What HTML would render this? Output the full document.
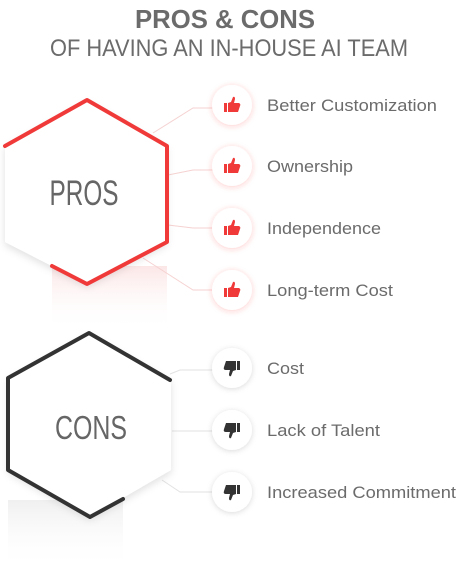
<!DOCTYPE html>
<html><head><style>html,body{margin:0;padding:0;background:#fff}svg{display:block}</style></head>
<body>
<svg width="460" height="580" viewBox="0 0 460 580" xmlns="http://www.w3.org/2000/svg">
<defs>
<linearGradient id="pg" x1="0" y1="0" x2="0" y2="1"><stop offset="0" stop-color="#f8c8c8" stop-opacity=".45"/><stop offset="1" stop-color="#fff" stop-opacity="0"/></linearGradient>
<linearGradient id="cg" x1="0" y1="0" x2="0" y2="1"><stop offset="0" stop-color="#ddd" stop-opacity=".45"/><stop offset="1" stop-color="#fff" stop-opacity="0"/></linearGradient>
<filter id="sh" x="-20%" y="-20%" width="140%" height="140%"><feDropShadow dx="0" dy="3" stdDeviation="4" flood-color="#000" flood-opacity=".12"/></filter>
<filter id="rs" x="-40%" y="-40%" width="180%" height="180%"><feDropShadow dx="0" dy="1" stdDeviation="3" flood-color="#f33" flood-opacity=".25"/></filter>
<filter id="gs" x="-40%" y="-40%" width="180%" height="180%"><feDropShadow dx="0" dy="1" stdDeviation="3" flood-color="#000" flood-opacity=".15"/></filter>
</defs>
<text x="225" y="28" text-anchor="middle" font-family="Liberation Sans, sans-serif" font-weight="bold" font-size="26" fill="#6b6b6b" textLength="180" lengthAdjust="spacingAndGlyphs">PROS &amp; CONS</text>
<text x="229" y="56" text-anchor="middle" font-family="Liberation Sans, sans-serif" font-size="24" fill="#6b6b6b" textLength="358" lengthAdjust="spacingAndGlyphs">OF HAVING AN IN-HOUSE AI TEAM</text>

<rect x="52" y="266" width="115" height="64" fill="url(#pg)"/>
<rect x="8" y="500" width="115" height="70" fill="url(#cg)"/>

<g fill="none" stroke="#f6d2d2" stroke-width="1">
<polyline points="153,133 193,108 214,108"/>
<polyline points="168,175 193,170 214,170"/>
<polyline points="168,225 193,228 214,228"/>
<polyline points="143,258 193,290 214,290"/>
</g>
<g fill="none" stroke="#e2e2e2" stroke-width="1">
<polyline points="170,374 180,370 214,370"/>
<polyline points="172,431 214,431"/>
<polyline points="162,480 180,492 214,492"/>
</g>

<polygon points="87,100 167,146 167,242 87,284 5,242 5,146" fill="#fff" filter="url(#sh)"/>
<polyline points="5,146 87,100 167,146 167,242 87,284 52,266" fill="none" stroke="#f03a3a" stroke-width="4" stroke-linecap="round" stroke-linejoin="round"/>
<text x="84" y="205" text-anchor="middle" font-family="Liberation Sans Narrow, sans-serif" font-size="35" fill="#666" textLength="69" lengthAdjust="spacingAndGlyphs">PROS</text>

<polygon points="89,333 171,380 171,470 90,517 8,470 8,378" fill="#fff" filter="url(#sh)"/>
<polyline points="170,380 89,333 8,378 8,470 90,517 123,499" fill="none" stroke="#333" stroke-width="4" stroke-linecap="round" stroke-linejoin="round"/>
<text x="91" y="439" text-anchor="middle" font-family="Liberation Sans Narrow, sans-serif" font-size="33" fill="#666" textLength="72" lengthAdjust="spacingAndGlyphs">CONS</text>

<g font-family="Liberation Sans, sans-serif" font-size="17" fill="#6b6b6b">
<g transform="translate(232,105)"><circle r="20" fill="#fff" filter="url(#rs)"/><g fill="#f03a3a"><rect x="-8" y="-2" width="3" height="9"/><path d="M-4,-2 L-1,-3 L1,-8 Q3,-9 3,-6 L2,-2 L7,-2 Q9,-1 8,1 L6,7 L-4,7 Z"/></g></g>
<text x="267" y="111" textLength="170" lengthAdjust="spacingAndGlyphs">Better Customization</text>
<g transform="translate(232,166)"><circle r="20" fill="#fff" filter="url(#rs)"/><g fill="#f03a3a"><rect x="-8" y="-2" width="3" height="9"/><path d="M-4,-2 L-1,-3 L1,-8 Q3,-9 3,-6 L2,-2 L7,-2 Q9,-1 8,1 L6,7 L-4,7 Z"/></g></g>
<text x="267" y="172" textLength="86" lengthAdjust="spacingAndGlyphs">Ownership</text>
<g transform="translate(232,228)"><circle r="20" fill="#fff" filter="url(#rs)"/><g fill="#f03a3a"><rect x="-8" y="-2" width="3" height="9"/><path d="M-4,-2 L-1,-3 L1,-8 Q3,-9 3,-6 L2,-2 L7,-2 Q9,-1 8,1 L6,7 L-4,7 Z"/></g></g>
<text x="267" y="234" textLength="114" lengthAdjust="spacingAndGlyphs">Independence</text>
<g transform="translate(232,290)"><circle r="20" fill="#fff" filter="url(#rs)"/><g fill="#f03a3a"><rect x="-8" y="-2" width="3" height="9"/><path d="M-4,-2 L-1,-3 L1,-8 Q3,-9 3,-6 L2,-2 L7,-2 Q9,-1 8,1 L6,7 L-4,7 Z"/></g></g>
<text x="267" y="296" textLength="126" lengthAdjust="spacingAndGlyphs">Long-term Cost</text>

<g transform="translate(232,368)"><circle r="20" fill="#fff" filter="url(#gs)"/><g fill="#333"><rect x="5" y="-7" width="3" height="9"/><path d="M4,-7 L-6,-7 L-8,-1 Q-9,2 -6,2 L-2,2 L-3,6 Q-3,9 -1,8 L1,3 L4,2 Z"/></g></g>
<text x="267" y="374" textLength="37" lengthAdjust="spacingAndGlyphs">Cost</text>
<g transform="translate(232,430)"><circle r="20" fill="#fff" filter="url(#gs)"/><g fill="#333"><rect x="5" y="-7" width="3" height="9"/><path d="M4,-7 L-6,-7 L-8,-1 Q-9,2 -6,2 L-2,2 L-3,6 Q-3,9 -1,8 L1,3 L4,2 Z"/></g></g>
<text x="267" y="436" textLength="113" lengthAdjust="spacingAndGlyphs">Lack of Talent</text>
<g transform="translate(232,492)"><circle r="20" fill="#fff" filter="url(#gs)"/><g fill="#333"><rect x="5" y="-7" width="3" height="9"/><path d="M4,-7 L-6,-7 L-8,-1 Q-9,2 -6,2 L-2,2 L-3,6 Q-3,9 -1,8 L1,3 L4,2 Z"/></g></g>
<text x="267" y="498" textLength="189" lengthAdjust="spacingAndGlyphs">Increased Commitment</text>
</g>
</svg>
</body></html>
